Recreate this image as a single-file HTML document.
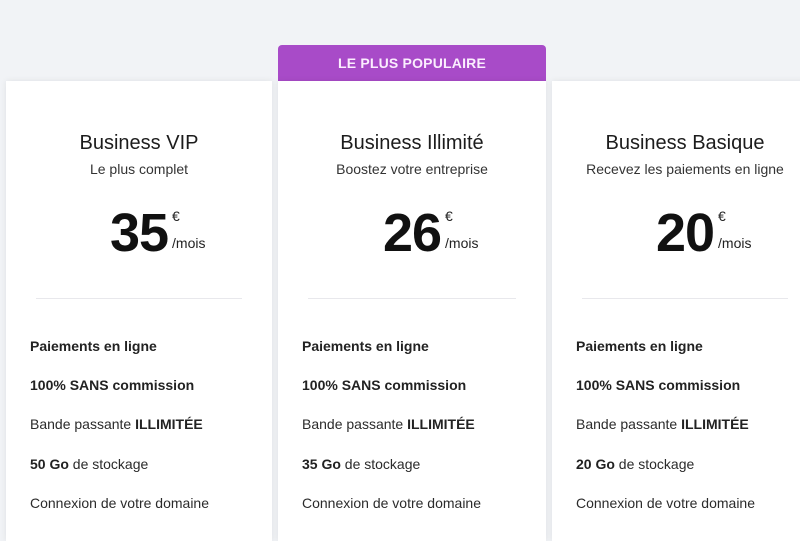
<!DOCTYPE html>
<html><head><style>
*{margin:0;padding:0;box-sizing:border-box}
body{width:800px;height:527px;overflow:hidden;background:#f1f3f6;font-family:"Liberation Sans",sans-serif;position:relative;color:#2b2b2b}
.card{position:absolute;top:81px;height:460px;background:#fff;box-shadow:0 0 6px rgba(0,0,0,.08)}
.banner{position:absolute;left:278px;top:45px;width:268px;height:36px;background:#a84bc8;border-radius:4px 4px 0 0;color:#fbeefe;font-weight:bold;font-size:14px;text-align:center;line-height:36px;letter-spacing:.2px}
.t{position:absolute;top:51px;width:100%;text-align:center;font-size:20px;color:#1c1c1c}
.s{position:absolute;top:80px;width:100%;text-align:center;font-size:14px;color:#333}
.p{position:absolute;top:119px;width:100%;text-align:center}
.p b{font-size:54px;font-weight:bold;color:#111;letter-spacing:-1px;display:inline-block;position:relative;line-height:66px}
.p span{position:absolute;left:100%;top:0;text-align:left;font-size:14px;line-height:16px;color:#222;margin-left:4px;font-weight:normal;letter-spacing:0}
.p span i{font-style:normal;display:block;margin-top:8px}
.p span em{font-style:normal;display:block;margin-top:11px}
.d{position:absolute;top:217px;left:30px;right:30px;height:1px;background:#e8e8ec}
.f{position:absolute;left:24px;font-size:14px;color:#2b2b2b}
.f b{color:#222}
</style></head><body>
<div class="banner">LE PLUS POPULAIRE</div>
<div class="card" style="left:6px;width:266px">
<div class="t">Business VIP</div><div class="s">Le plus complet</div>
<div class="p"><b>35<span><i>€</i><em>/mois</em></span></b></div>
<div class="d"></div>
<div class="f" style="top:257px"><b>Paiements en ligne</b></div>
<div class="f" style="top:296px"><b>100% SANS commission</b></div>
<div class="f" style="top:335px">Bande passante <b>ILLIMITÉE</b></div>
<div class="f" style="top:375px"><b>50 Go</b> de stockage</div>
<div class="f" style="top:414px">Connexion de votre domaine</div>
</div>
<div class="card" style="left:278px;width:268px">
<div class="t">Business Illimité</div><div class="s">Boostez votre entreprise</div>
<div class="p"><b>26<span><i>€</i><em>/mois</em></span></b></div>
<div class="d"></div>
<div class="f" style="top:257px"><b>Paiements en ligne</b></div>
<div class="f" style="top:296px"><b>100% SANS commission</b></div>
<div class="f" style="top:335px">Bande passante <b>ILLIMITÉE</b></div>
<div class="f" style="top:375px"><b>35 Go</b> de stockage</div>
<div class="f" style="top:414px">Connexion de votre domaine</div>
</div>
<div class="card" style="left:552px;width:266px">
<div class="t" style="width:266px">Business Basique</div><div class="s" style="width:266px">Recevez les paiements en ligne</div>
<div class="p" style="width:266px"><b>20<span><i>€</i><em>/mois</em></span></b></div>
<div class="d" style="right:30px;width:206px"></div>
<div class="f" style="top:257px"><b>Paiements en ligne</b></div>
<div class="f" style="top:296px"><b>100% SANS commission</b></div>
<div class="f" style="top:335px">Bande passante <b>ILLIMITÉE</b></div>
<div class="f" style="top:375px"><b>20 Go</b> de stockage</div>
<div class="f" style="top:414px">Connexion de votre domaine</div>
</div>
</body></html>
